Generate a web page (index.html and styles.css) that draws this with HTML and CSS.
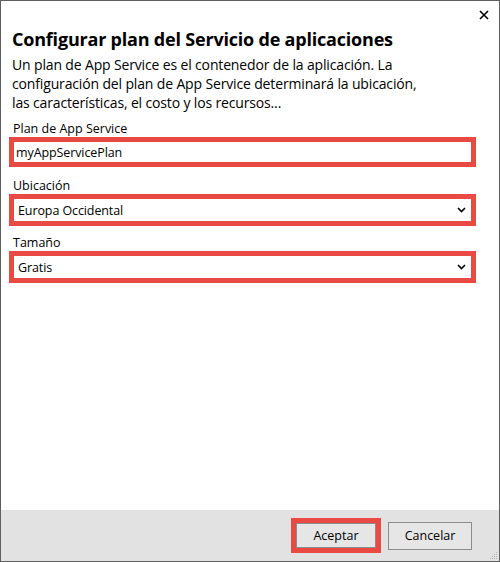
FILE: index.html
```html
<!DOCTYPE html>
<html lang="es">
<head>
<meta charset="utf-8">
<title>Configurar plan del Servicio de aplicaciones</title>
<link rel="stylesheet" href="styles.css">
</head>
<body>
<div class="window">
  <div class="titlebar">
    <svg class="close" width="10" height="10" viewBox="0 0 10 10"><path d="M1 1L9 9M9 1L1 9" stroke="#000" stroke-width="1.6" fill="none"/></svg>
  </div>
  <div class="content">
    <h1 class="title">Configurar plan del Servicio de aplicaciones</h1>
    <p class="desc">Un plan de App Service es el contenedor de la aplicación. La configuración del plan de App Service determinará la ubicación, las características, el costo y los recursos...</p>
    <div class="group first">
      <div class="label">Plan de App Service</div>
      <div class="hl"><div class="field text">myAppServicePlan</div></div>
    </div>
    <div class="group second">
      <div class="label">Ubicación</div>
      <div class="hl"><div class="field select"><span>Europa Occidental</span><svg class="chev" width="9" height="6" viewBox="0 0 9 6"><path d="M1 1L4.5 4.5L8 1" stroke="#000" stroke-width="1.6" fill="none"/></svg></div></div>
    </div>
    <div class="group third">
      <div class="label">Tamaño</div>
      <div class="hl"><div class="field select"><span>Gratis</span><svg class="chev" width="9" height="6" viewBox="0 0 9 6"><path d="M1 1L4.5 4.5L8 1" stroke="#000" stroke-width="1.6" fill="none"/></svg></div></div>
    </div>
  </div>
  <div class="footer">
    <div class="btn-hl"><div class="btn ok">Aceptar</div></div>
    <div class="btn cancel">Cancelar</div>
    <svg class="grip" width="10" height="10" viewBox="0 0 10 10">
      <rect x="8" y="2" width="1" height="1" fill="#b5b5b5"/>
      <rect x="6" y="4" width="1" height="1" fill="#b5b5b5"/><rect x="8" y="4" width="1" height="1" fill="#b5b5b5"/>
      <rect x="4" y="6" width="1" height="1" fill="#b5b5b5"/><rect x="6" y="6" width="1" height="1" fill="#b5b5b5"/><rect x="8" y="6" width="1" height="1" fill="#b5b5b5"/>
      <rect x="2" y="8" width="1" height="1" fill="#b5b5b5"/><rect x="4" y="8" width="1" height="1" fill="#b5b5b5"/><rect x="6" y="8" width="1" height="1" fill="#b5b5b5"/><rect x="8" y="8" width="1" height="1" fill="#b5b5b5"/>
    </svg>
  </div>
</div>
</body>
</html>
```
FILE: styles.css
```css
* { box-sizing: border-box; }
html, body { margin: 0; padding: 0; background: #fff; }
body { font-family: "Open Sans", "Noto Sans", sans-serif; color: #000; }

.window {
  width: 500px;
  height: 562px;
  border: 1px solid #5f5f5f;
  display: flex;
  flex-direction: column;
  background: #fff;
  position: relative;
}

.titlebar {
  height: 26px;
  display: flex;
  justify-content: flex-end;
  align-items: center;
  padding-right: 10px;
  padding-top: 1px;
}

.content {
  flex: 1;
  padding: 0 23px 0 11px;
}

.title {
  margin: 0;
  font-size: 18px;
  font-weight: 700;
  line-height: 25px;
  letter-spacing: -0.2px;
}

.desc {
  margin: 3px 0 0;
  font-size: 14px;
  line-height: 19px;
  letter-spacing: -0.15px;
  max-width: 420px;
}

.group { display: flex; flex-direction: column; }
.group.first { margin-top: 8px; }
.group.second { margin-top: 10px; }
.group.third { margin-top: 8px; }

.label {
  font-size: 12.5px;
  line-height: 17px;
  padding-left: 1px;
}

.hl {
  border: 5px solid #e94a44;
  margin-left: -3px;
  background: #fff;
}

.field {
  font-size: 12.5px;
  display: flex;
  align-items: center;
  letter-spacing: -0.1px;
}
.field.text { height: 20px; padding-left: 2px; }
.field.select { height: 22px; padding-left: 4px; padding-right: 5px; justify-content: space-between; }
.chev { display: block; }

.footer {
  height: 51px;
  background: #e2e2e2;
  display: flex;
  align-items: center;
  justify-content: flex-end;
  padding-right: 27px;
  gap: 7px;
  position: relative;
}

.btn-hl {
  border: 5px solid #e94a44;
}

.btn {
  font-size: 12.5px;
  height: 27px;
  display: flex;
  align-items: center;
  justify-content: center;
  background: #e6e6e6;
  border: 1px solid #8c8c8c;
}
.btn.ok { width: 80px; height: 25px; }
.btn.cancel { width: 84px; height: 28px; }

.grip {
  position: absolute;
  right: 1px;
  bottom: 1px;
}
```
